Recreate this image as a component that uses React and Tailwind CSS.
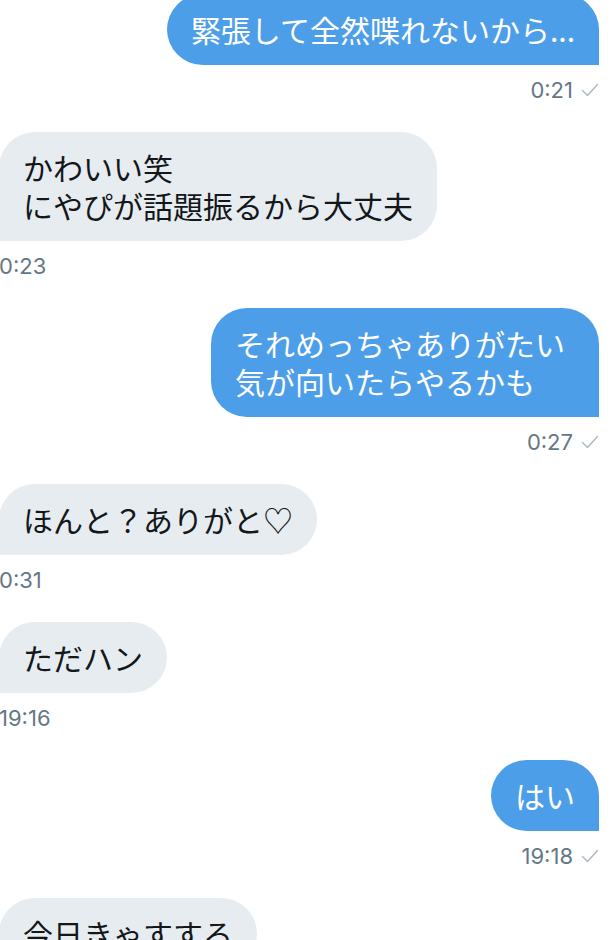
const messages = [
  { side: 'out', lines: ['緊張して全然喋れないから...'], time: '0:21' },
  { side: 'in', lines: ['かわいい笑', 'にやぴが話題振るから大丈夫'], time: '0:23' },
  { side: 'out', lines: ['それめっちゃありがたい', '気が向いたらやるかも'], time: '0:27', wide: true },
  { side: 'in', lines: ['ほんと？ありがと♡'], time: '0:31' },
  { side: 'in', lines: ['ただハン'], time: '19:16' },
  { side: 'out', lines: ['はい'], time: '19:18' },
  { side: 'in', lines: ['今日きゃすする'], time: '' },
]

function Check() {
  return (
    <svg width="18" height="14" viewBox="0 0 18 14" fill="none" className="ml-[8px]">
      <path d="M1.5 7.5 L6.5 12.5 L16.5 1.5" stroke="#aab8c2" strokeWidth="1.4" strokeLinecap="round" strokeLinejoin="round" />
    </svg>
  )
}

function Message({ side, lines, time, wide }) {
  const out = side === 'out'
  return (
    <div className={out ? 'flex flex-col items-end' : 'flex flex-col items-start'}>
      <div
        className={
          out
            ? `bg-[#4d9ee9] text-white rounded-[36px] rounded-br-none pl-[24px] pt-[16px] pb-[17px] ${wide ? 'pr-[34px]' : 'pr-[24px]'}`
            : 'bg-[#e6ecf0] text-[#14171a] rounded-[36px] rounded-bl-none px-[24px] pt-[16px] pb-[17px] ml-[-1px]'
        }
      >
        {lines.map((l, i) => (
          <div key={i} className="text-[30px] leading-[38px] whitespace-nowrap">{l}</div>
        ))}
      </div>
      {time && (
        <div className="mt-[11px] h-[28px] flex items-center text-[22px] text-[#657786] font-['Inter',sans-serif]">
          <span className={out ? '' : 'ml-[-1px]'}>{time}</span>
          {out && <Check />}
        </div>
      )}
    </div>
  )
}

export default function App() {
  return (
    <div className="w-[611px] h-[940px] overflow-hidden bg-white font-['Noto_Sans_CJK_JP','Noto_Sans',sans-serif]">
      <div className="mt-[-6px] pr-[12px] flex flex-col gap-[28px]">
        {messages.map((m, i) => (
          <Message key={i} {...m} />
        ))}
      </div>
    </div>
  )
}
